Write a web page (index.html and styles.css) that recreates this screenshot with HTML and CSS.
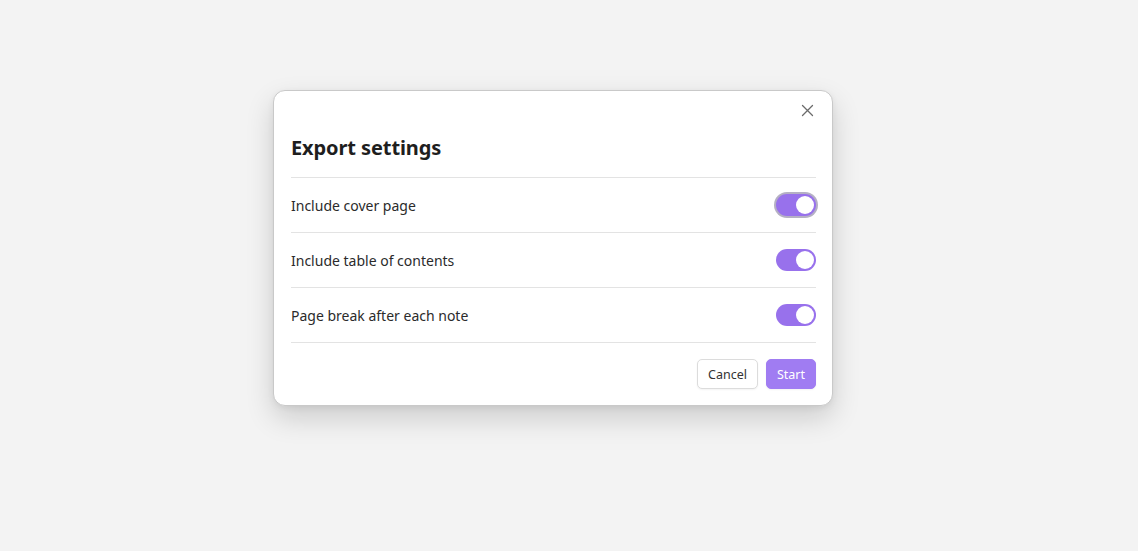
FILE: index.html
```html
<!DOCTYPE html>
<html>
<head>
<meta charset="utf-8">
<link rel="stylesheet" href="styles.css">
</head>
<body>
<div class="modal">
  <button class="modal-close" aria-label="Close">
    <svg width="13" height="13" viewBox="0 0 13 13"><path d="M1.5 1.5 L11.5 11.5 M11.5 1.5 L1.5 11.5" stroke="#6b6b6b" stroke-width="1.3" fill="none" stroke-linecap="round"/></svg>
  </button>
  <h1 class="modal-title">Export settings</h1>
  <div class="settings">
    <div class="setting">
      <span class="setting-name">Include cover page</span>
      <div class="toggle on focused"><span class="knob"></span></div>
    </div>
    <div class="setting">
      <span class="setting-name">Include table of contents</span>
      <div class="toggle on"><span class="knob"></span></div>
    </div>
    <div class="setting">
      <span class="setting-name">Page break after each note</span>
      <div class="toggle on"><span class="knob"></span></div>
    </div>
  </div>
  <div class="actions">
    <button class="btn">Cancel</button>
    <button class="btn btn-primary">Start</button>
  </div>
</div>
</body>
</html>
```
FILE: styles.css
```css
html, body {
  margin: 0;
  padding: 0;
  background: #f3f3f3;
  height: 100%;
}
body {
  padding: 90px 0 0 273px;
  box-sizing: border-box;
  font-family: "Noto Sans", "Open Sans", sans-serif;
  color: #222;
}
.modal {
  position: relative;
  width: 560px;
  box-sizing: border-box;
  background: #fff;
  border: 1px solid #c9c9c9;
  border-radius: 12px;
  padding: 16px 16px 16px 17px;
  box-shadow: 0 12px 28px rgba(0,0,0,0.16), 0 2px 6px rgba(0,0,0,0.06);
}
.modal-close {
  position: absolute;
  top: 11px;
  right: 17px;
  width: 16px;
  height: 16px;
  padding: 0;
  border: 0;
  background: none;
  display: flex;
  align-items: center;
  justify-content: center;
}
.modal-title {
  margin: 27px 0 15px 0;
  font-size: 20px;
  line-height: 28px;
  font-weight: 700;
  color: #1e1e1e;
  letter-spacing: -0.1px;
}
.settings {
  border-bottom: 1px solid #e3e3e3;
}
.setting {
  height: 54px;
  border-top: 1px solid #e3e3e3;
  display: flex;
  align-items: center;
  justify-content: space-between;
}
.setting-name {
  font-size: 14px;
  color: #2b2b2b;
}
.toggle {
  width: 40px;
  height: 22px;
  border-radius: 11px;
  background: #ccc;
  position: relative;
  box-sizing: border-box;
}
.toggle.on {
  background: #9871ec;
}
.toggle.focused {
  box-shadow: 0 0 0 2px #b5b0c4;
}
.knob {
  position: absolute;
  top: 2px;
  right: 2px;
  width: 18px;
  height: 18px;
  border-radius: 50%;
  background: #fff;
}
.actions {
  display: flex;
  justify-content: flex-end;
  gap: 8px;
  margin-top: 16px;
}
.btn {
  height: 30px;
  padding: 0 10px;
  font-family: "Noto Sans", "Open Sans", sans-serif;
  font-size: 12.5px;
  border: 1px solid #dcdcdc;
  background: #fff;
  color: #333;
  border-radius: 5px;
  box-shadow: 0 1px 2px rgba(0,0,0,0.05);
}
.btn-primary {
  background: #a07cf2;
  border-color: #a07cf2;
  color: #fff;
}
```
